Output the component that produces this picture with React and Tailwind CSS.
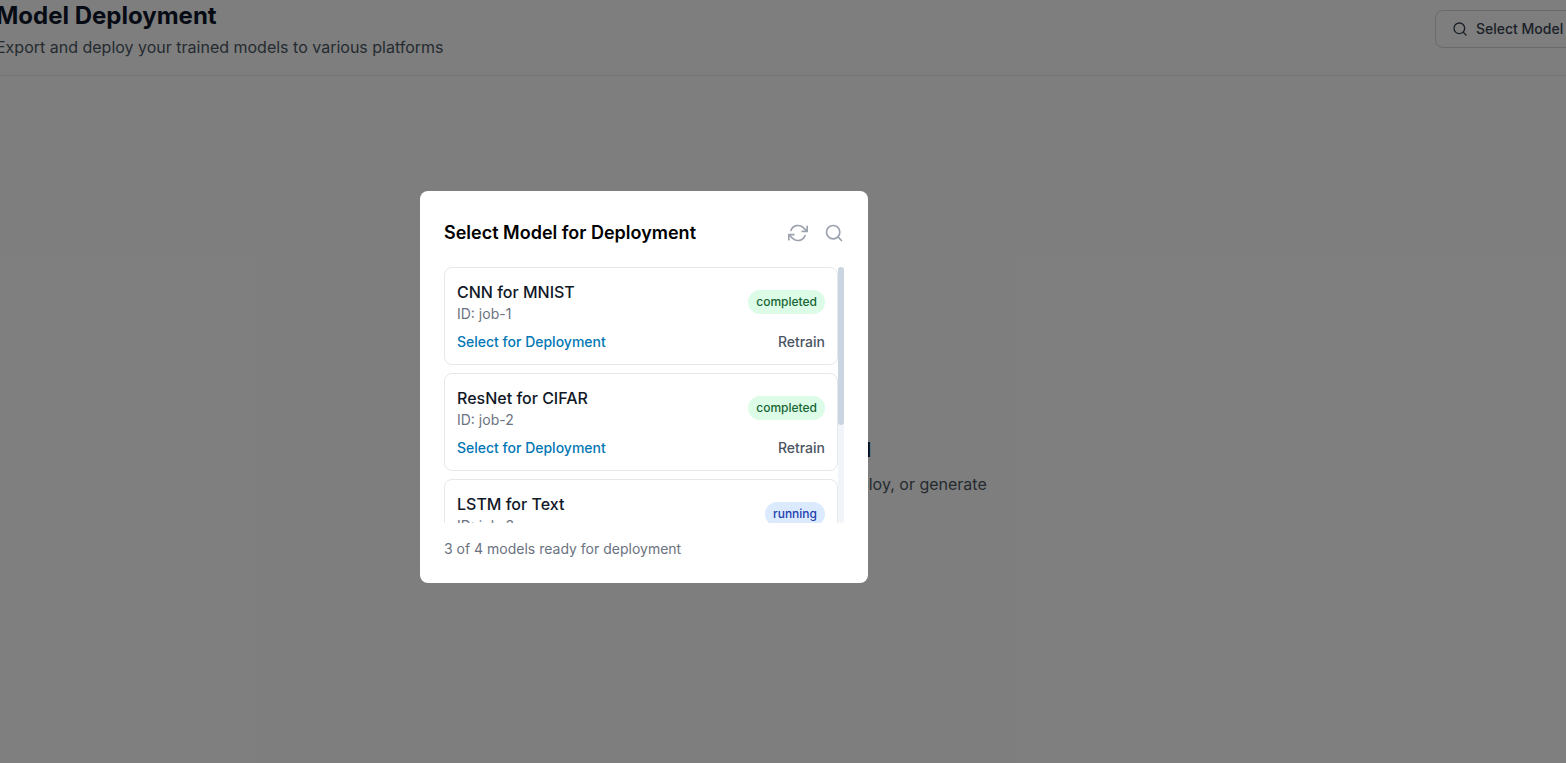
import React from "react";
import { Search } from "lucide-react";
import { FiRefreshCw } from "react-icons/fi";

const jobs = [
    { name: "CNN for MNIST", id: "job-1", status: "completed" },
    { name: "ResNet for CIFAR", id: "job-2", status: "completed" },
    { name: "LSTM for Text", id: "job-3", status: "running" },
    { name: "Transformer for NLP", id: "job-4", status: "completed" },
];

function JobCard({ job }) {
    const running = job.status === "running";
    return (
        <div className="h-[98px] shrink-0 rounded-lg border border-[#e5e7eb] bg-white px-3 pt-3">
            <div className="flex items-center justify-between">
                <div>
                    <p className="text-base leading-6 font-medium text-[#111827]">{job.name}</p>
                    <p className="text-sm leading-5 text-[#6b7280]">ID: {job.id}</p>
                </div>
                <span
                    className={
                        running
                            ? "rounded-full bg-[#dbeafe] px-2 py-1 text-xs leading-4 font-medium text-[#1e40af]"
                            : "rounded-full bg-[#dcfce7] px-2 py-1 text-xs leading-4 font-medium text-[#166534]"
                    }
                >
                    {job.status}
                </span>
            </div>
            <div className="mt-2 flex items-center justify-between">
                <button className="text-sm leading-5 font-medium text-[#0277b5]">Select for Deployment</button>
                <button className="text-sm leading-5 font-medium text-[#4b5563]">Retrain</button>
            </div>
        </div>
    );
}

export default function App() {
    return (
        <div className="relative h-[763px] w-[1566px] overflow-hidden bg-[#fbfdfb] font-['Inter',sans-serif]">
            <header className="-ml-[4px] flex h-[76px] w-[1700px] items-start justify-between border-b border-[#e5e7eb] pr-[61px]">
                <div>
                    <h1 className="text-2xl leading-8 font-bold text-[#0f172a]">Model Deployment</h1>
                    <p className="mt-[3px] text-base leading-6 text-[#4b5563]">
                        Export and deploy your trained models to various platforms
                    </p>
                </div>
                <button className="mt-[10px] flex h-[38px] w-[200px] items-center gap-2 rounded-lg border border-[#d1d5db] px-4 text-sm font-medium text-[#374151]">
                    <Search size={16} />
                    Select Model
                </button>
            </header>
            <div className="ml-[399px] mt-[360px] w-[684px] text-center">
                <h3 className="text-xl leading-7 font-semibold text-[#0f172a]">No Trained Model Selected</h3>
                <p className="mt-2 whitespace-nowrap text-base leading-6 text-[#4b5563]">
                    Select a trained model from the list to export, deploy, or generate
                </p>
            </div>

            {/* overlay */}
            <div className="absolute inset-0 bg-[#000000]/50 pl-[420px] pt-[191px]">
                <div className="w-[448px] rounded-lg bg-white p-6">
                    <div className="flex h-[36px] items-center justify-between">
                        <h2 className="text-lg leading-7 font-semibold text-black">Select Model for Deployment</h2>
                        <div className="flex items-center gap-4 text-[#9ca3af]">
                            <FiRefreshCw size={20} />
                            <Search size={20} />
                        </div>
                    </div>
                    <div className="relative mt-4 h-[256px] overflow-hidden">
                        <div className="flex w-[394px] flex-col gap-2">
                            {jobs.map((job) => (
                                <JobCard key={job.id} job={job} />
                            ))}
                        </div>
                        {/* scrollbar */}
                        <div className="absolute top-0 right-0 h-full w-[6px] rounded-full bg-[#f1f5f9]">
                            <div className="h-[158px] w-[6px] rounded-full bg-[#cbd5e1]"></div>
                        </div>
                    </div>
                    <p className="mt-4 text-sm leading-5 text-[#6b7280]">3 of 4 models ready for deployment</p>
                </div>
            </div>
        </div>
    );
}
